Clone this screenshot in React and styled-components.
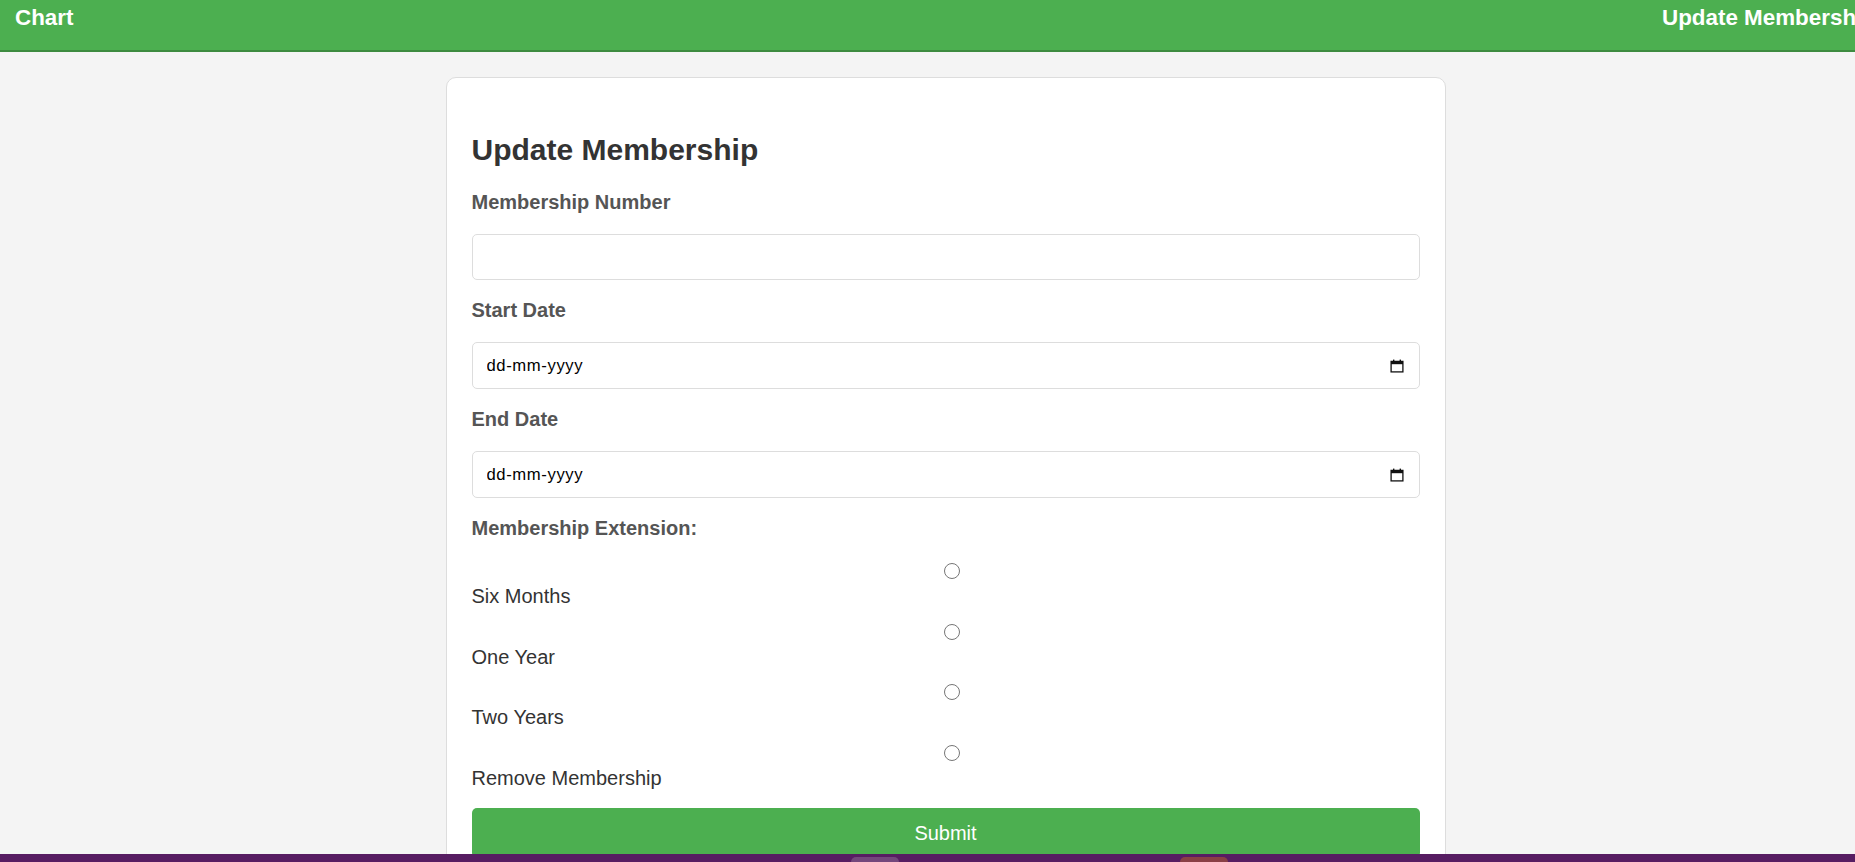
import React from "react";
import styled, { createGlobalStyle } from "styled-components";

const GlobalStyle = createGlobalStyle`
  html, body {
    margin: 0;
    padding: 0;
    overflow: hidden;
    background: #f4f4f4;
    font-family: "Liberation Sans", Arial, sans-serif;
  }
  * { box-sizing: border-box; }
`;

const Page = styled.div`
  width: 1891px;
  min-height: 862px;
  background: #f4f4f4;
`;

const Header = styled.header`
  height: 52px;
  background: #4caf50;
  border-bottom: 2px solid #3d8b40;
  display: flex;
  justify-content: space-between;
  align-items: flex-start;
  padding: 5px 15px 0 15px;
`;

const NavLink = styled.a`
  color: #ffffff;
  font-size: 22.4px;
  font-weight: bold;
  text-decoration: none;
  line-height: 25px;
`;

const Card = styled.form`
  width: 1000px;
  margin: 25px auto 0;
  background: #ffffff;
  border: 1px solid #dddddd;
  border-radius: 10px;
  padding: 25px 25px 40px;
  display: flex;
  flex-direction: column;
`;

const Title = styled.h2`
  margin: 30px 0 23px;
  font-size: 30px;
  line-height: 34.5px;
  font-weight: bold;
  color: #333333;
`;

const FieldLabel = styled.label`
  display: block;
  font-size: 20px;
  line-height: 23px;
  font-weight: bold;
  color: #555555;
  margin-bottom: 20.5px;
`;

const TextInput = styled.input`
  width: 100%;
  height: 46px;
  border: 1px solid #dddddd;
  border-radius: 5px;
  padding: 0 14px;
  font-size: 18px;
  font-family: "Liberation Sans", Arial, sans-serif;
  margin: 0 0 18.5px;
  background: #ffffff;
  outline: none;
`;

const DateField = styled.div`
  width: 100%;
  height: 47px;
  border: 1px solid #dddddd;
  border-radius: 5px;
  padding: 0 15px 0 14px;
  margin: 0 0 18.5px;
  display: flex;
  align-items: center;
  background: #ffffff;
`;

const DateText = styled.input`
  flex: 1;
  border: none;
  outline: none;
  padding: 0;
  font-size: 16.67px;
  font-family: "Liberation Sans", Arial, sans-serif;
  letter-spacing: 0.6px;
  color: #000000;
  background: transparent;
  &::placeholder {
    color: #000000;
    opacity: 1;
  }
`;

const CalendarIcon = () => (
  <svg width="14" height="14" viewBox="0 0 14 14" aria-hidden="true">
    <rect x="1.1" y="2.4" width="11.8" height="10.5" fill="none" stroke="#111" strokeWidth="1.3" />
    <rect x="1" y="2.2" width="12" height="3" fill="#111" />
    <rect x="3" y="0.6" width="1.4" height="2" fill="#111" />
    <rect x="9.6" y="0.6" width="1.4" height="2" fill="#111" />
  </svg>
);

const RadioGroup = styled.div`
  display: flex;
  flex-direction: column;
`;

const Option = styled.div`
  display: flex;
  flex-direction: column;
  padding: 3px 0 12.5px;
`;

const RadioRow = styled.div`
  display: flex;
  justify-content: center;
  padding-left: 12px;
  height: 16px;
`;

const Radio = styled.input`
  width: 16px;
  height: 16px;
  margin: 0;
`;

const OptionLabel = styled.label`
  margin-top: 6px;
  font-size: 20px;
  line-height: 23px;
  color: #333333;
`;

const SubmitButton = styled.button`
  margin-top: 6px;
  width: 100%;
  height: 50px;
  border: none;
  border-radius: 5px;
  background: #4caf50;
  color: #ffffff;
  font-size: 20px;
  font-family: "Liberation Sans", Arial, sans-serif;
  cursor: pointer;
`;

const Taskbar = styled.div`
  position: fixed;
  left: 0;
  right: 0;
  bottom: 0;
  height: 8px;
  background: #571d62;
  display: flex;
  align-items: flex-end;
`;

const TaskbarTab = styled.span`
  display: block;
  height: 5px;
  width: 48px;
  margin-left: ${(p) => p.$left}px;
  border-radius: 6px 6px 0 0;
  background: ${(p) => p.$color};
`;

const options = ["Six Months", "One Year", "Two Years", "Remove Membership"];

export default function App() {
  return (
    <>
      <GlobalStyle />
      <Page>
        <Header>
          <NavLink href="#">Chart</NavLink>
          <NavLink href="#">Update Membership</NavLink>
        </Header>
        <Card onSubmit={(e) => e.preventDefault()}>
          <Title>Update Membership</Title>
          <FieldLabel htmlFor="num">Membership Number</FieldLabel>
          <TextInput id="num" type="text" />
          <FieldLabel htmlFor="start">Start Date</FieldLabel>
          <DateField>
            <DateText id="start" type="text" placeholder="dd-mm-yyyy" />
            <CalendarIcon />
          </DateField>
          <FieldLabel htmlFor="end">End Date</FieldLabel>
          <DateField>
            <DateText id="end" type="text" placeholder="dd-mm-yyyy" />
            <CalendarIcon />
          </DateField>
          <FieldLabel as="div">Membership Extension:</FieldLabel>
          <RadioGroup>
            {options.map((o, i) => (
              <Option key={o}>
                <RadioRow>
                  <Radio type="radio" name="ext" id={`ext${i}`} />
                </RadioRow>
                <OptionLabel htmlFor={`ext${i}`}>{o}</OptionLabel>
              </Option>
            ))}
          </RadioGroup>
          <SubmitButton type="submit">Submit</SubmitButton>
        </Card>
      </Page>
      <Taskbar>
        <TaskbarTab $left={851} $color="#74467c" />
        <TaskbarTab $left={281} $color="#8a3f45" />
      </Taskbar>
    </>
  );
}
